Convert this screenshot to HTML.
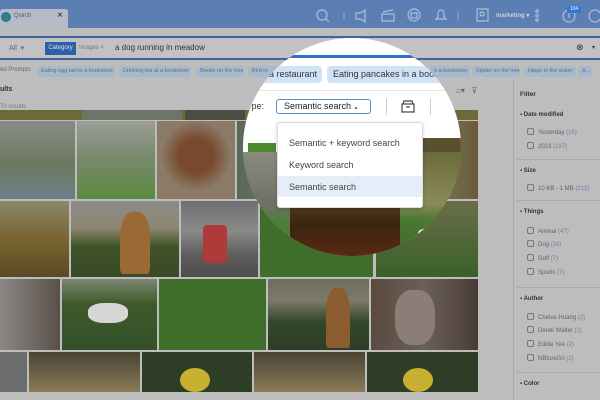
<!DOCTYPE html>
<html><head><meta charset="utf-8"><style>
*{margin:0;padding:0;box-sizing:border-box}
body{width:600px;height:400px;overflow:hidden;position:relative;background:#bdbdbd;font-family:"Liberation Sans",sans-serif}
.a{position:absolute}
.chip{position:absolute;top:66px;height:11px;background:#a9b9cc;border-radius:3px;font-size:5.5px;color:#5a6f8c;line-height:11px;padding:0 4px;white-space:nowrap;overflow:hidden}
.side div{position:absolute;font-size:6px;color:#5a6270}
.cb{display:inline-block;width:7px;height:7px;border:1px solid #777;border-radius:2px;vertical-align:-1px;margin-right:4px}
</style></head><body>
<div class="a" style="left:0;top:0;width:600px;height:28px;background:#5b7fb2"></div>
<div class="a" style="left:0;top:9px;width:68px;height:19px;background:#b6bcc6;border-radius:3px 3px 0 0"></div>
<div class="a" style="left:1px;top:12px;width:10px;height:10px;border-radius:50%;background:#3a8a4a;border:2px solid #2f6fc0"></div>
<div class="a" style="left:14px;top:13px;font-size:6px;color:#556">Qsirch</div>
<div class="a" style="left:57px;top:10px;font-size:10px;color:#222">×</div>
<svg class="a" style="left:310px;top:6px" width="290" height="20" fill="none" stroke="#aebfd8" stroke-width="1.2">
<circle cx="12" cy="9" r="5"/><line x1="16" y1="13" x2="19" y2="16"/>
<line x1="34" y1="6" x2="34" y2="14" stroke="#8aa1c4"/>
<path d="M46 7h4l5-3v12l-5-3h-4z"/>
<path d="M72 8h12v7h-12zM73 6l10-2"/>
<circle cx="104" cy="9" r="6"/><rect x="101" y="7" width="6" height="5"/>
<path d="M126 13h10l-2-2v-4a3 3 0 0 0-6 0v4z"/>
<line x1="148" y1="6" x2="148" y2="14" stroke="#8aa1c4"/>
<rect x="167" y="3" width="11" height="12"/><circle cx="172" cy="8" r="2"/>
<circle cx="227" cy="5" r="1.2"/><circle cx="227" cy="9.5" r="1.2"/><circle cx="227" cy="14" r="1.2"/>
<circle cx="259" cy="10" r="6"/><line x1="259" y1="7" x2="259" y2="12"/>
<circle cx="285" cy="10" r="6"/>
</svg>
<div class="a" style="left:496px;top:12px;font-size:6px;color:#c8d3e4;font-weight:bold">marketing ▾</div>
<div class="a" style="left:567px;top:6px;width:14px;height:7px;background:#2f78d8;font-size:5px;color:#fff;text-align:center;line-height:7px">104</div>
<div class="a" style="left:0;top:36px;width:600px;height:2px;background:#3f64a0"></div>
<div class="a" style="left:0;top:38px;width:600px;height:21px;background:#c2c2c2"></div>
<div class="a" style="left:0;top:58px;width:600px;height:2px;background:#3f64a0"></div>
<div class="a" style="left:9px;top:44px;font-size:7px;color:#4a6a9a">All &nbsp;▾</div>
<div class="a" style="left:45px;top:42px;width:31px;height:13px;background:#2d5fa8;font-size:6px;color:#dfe6f1;line-height:13px;text-align:center">Category</div>
<div class="a" style="left:79px;top:45px;font-size:6px;color:#777">Images ×</div>
<div class="a" style="left:115px;top:43px;font-size:8px;color:#333">a dog running in meadow</div>
<div class="a" style="left:576px;top:42px;font-size:9px;color:#333">⊗</div>
<div class="a" style="left:592px;top:44px;font-size:6px;color:#333">▾</div>
<div class="a" style="left:0;top:67px;font-size:6px;color:#666">ed Prompts</div>
<div class="chip" style="left:37px;width:78px">Eating egg tart in a bookstore</div>
<div class="chip" style="left:119px;width:72px">Drinking tea at a bookstore</div>
<div class="chip" style="left:196px;width:48px">Beetle on the tree</div>
<div class="chip" style="left:248px;width:30px">Bird in</div>
<div class="chip" style="left:430px;width:40px">n a bookstore</div>
<div class="chip" style="left:472px;width:48px">Spider on the tree</div>
<div class="chip" style="left:524px;width:52px">Hippo in the water</div>
<div class="chip" style="left:578px;width:14px">A...</div>
<div class="a" style="left:0;top:86px;font-size:7px;color:#333;font-weight:bold">ults</div>
<div class="a" style="left:0;top:104px;font-size:6px;color:#777">70 results</div>
<div class="a" style="left:456px;top:86px;font-size:8px;color:#666">⌂▾ &nbsp; ⊽</div>
<div class="a" style="left:0;top:110px;width:478px;height:10px;background:#6e6a38"></div>
<div class="a" style="left:82px;top:110px;width:100px;height:10px;background:#6d7568"></div>
<div class="a" style="left:185px;top:110px;width:60px;height:10px;background:#4a4e40"></div>
<div class="a" style="left:0;top:121px;width:75px;height:78px;background:linear-gradient(#8a8b86,#6b7a5e 55%,#6e7e8a)"></div>
<div class="a" style="left:77px;top:121px;width:78px;height:78px;background:linear-gradient(#9a9e98,#7a8a6e 45%,#5a8a3e)"></div>
<div class="a" style="left:157px;top:121px;width:78px;height:78px;background:radial-gradient(circle at 50% 45%,#7a4a30 30%,#8a7a66 60%)"></div>
<div class="a" style="left:237px;top:121px;width:241px;height:78px;background:linear-gradient(90deg,#5a6a5a,#7a7a55 80%,#6c5a3a)"></div>
<div class="a" style="left:0;top:201px;width:69px;height:76px;background:linear-gradient(#8a8a6a,#7a6430 50%,#5a4a24)"></div>
<div class="a" style="left:71px;top:201px;width:108px;height:76px;background:linear-gradient(#8a8c88,#8e8670 35%,#3e5428 60%,#3a4a26)"></div>
<div class="a" style="left:120px;top:212px;width:30px;height:62px;border-radius:40% 40% 10% 10%;background:#9a6a36"></div>
<div class="a" style="left:181px;top:201px;width:77px;height:76px;background:linear-gradient(#6e7074,#8a8a88 40%,#5e5e5e 70%,#4e4e4e)"></div>
<div class="a" style="left:203px;top:225px;width:24px;height:38px;background:#b03a3a;border-radius:4px"></div>
<div class="a" style="left:260px;top:201px;width:113px;height:76px;background:#3f6e2a"></div>
<div class="a" style="left:376px;top:201px;width:102px;height:76px;background:linear-gradient(#6a6e4a,#3a6028)"></div>
<div class="a" style="left:0;top:279px;width:60px;height:71px;background:linear-gradient(90deg,#8a8886,#5a5048)"></div>
<div class="a" style="left:62px;top:279px;width:95px;height:71px;background:linear-gradient(#7a8670,#3e5a2a 35%,#34502a)"></div>
<div class="a" style="left:88px;top:303px;width:40px;height:20px;border-radius:40%;background:#d6d6d6"></div>
<div class="a" style="left:159px;top:279px;width:107px;height:71px;background:#3f6e2a"></div>
<div class="a" style="left:268px;top:279px;width:101px;height:71px;background:linear-gradient(#6e6c5e,#7e7a6a 30%,#34482a 60%,#2e3e26)"></div>
<div class="a" style="left:326px;top:288px;width:24px;height:60px;border-radius:40% 40% 10% 10%;background:#8a5c30"></div>
<div class="a" style="left:371px;top:279px;width:107px;height:71px;background:linear-gradient(90deg,#5a4a40,#6a6058 50%,#4a3c34)"></div>
<div class="a" style="left:395px;top:290px;width:40px;height:55px;border-radius:40%;background:#8a7e76"></div>
<div class="a" style="left:0;top:352px;width:27px;height:40px;background:#6a6c6e"></div>
<div class="a" style="left:29px;top:352px;width:111px;height:40px;background:linear-gradient(#4a4434,#8a7a56)"></div>
<div class="a" style="left:142px;top:352px;width:110px;height:40px;background:#2e3e26"></div>
<div class="a" style="left:180px;top:368px;width:30px;height:24px;border-radius:50%;background:#c8b030"></div>
<div class="a" style="left:254px;top:352px;width:111px;height:40px;background:linear-gradient(#4a4434,#8a7a56)"></div>
<div class="a" style="left:367px;top:352px;width:111px;height:40px;background:#2e3e26"></div>
<div class="a" style="left:403px;top:368px;width:30px;height:24px;border-radius:50%;background:#c8b030"></div>
<div class="a" style="left:513px;top:80px;width:1px;height:320px;background:#aaa"></div>
<div class="side">
<div style="left:520px;top:91px;font-weight:bold;font-size:6.5px;color:#333">Filter</div>
<div style="left:520px;top:112px;font-weight:bold;color:#333">▪ Date modified</div>
<div style="left:527px;top:128px"><span class="cb"></span>Yesterday <span style="color:#6a7fa0">(15)</span></div>
<div style="left:527px;top:142px"><span class="cb"></span>2023 <span style="color:#6a7fa0">(197)</span></div>
<div style="left:520px;top:168px;font-weight:bold;color:#333">▪ Size</div>
<div style="left:527px;top:184px"><span class="cb"></span>10 KB - 1 MB <span style="color:#6a7fa0">(212)</span></div>
<div style="left:520px;top:209px;font-weight:bold;color:#333">▪ Things</div>
<div style="left:527px;top:227px"><span class="cb"></span>Animal <span style="color:#6a7fa0">(47)</span></div>
<div style="left:527px;top:240px"><span class="cb"></span>Dog <span style="color:#6a7fa0">(28)</span></div>
<div style="left:527px;top:254px"><span class="cb"></span>Golf <span style="color:#6a7fa0">(7)</span></div>
<div style="left:527px;top:268px"><span class="cb"></span>Sports <span style="color:#6a7fa0">(7)</span></div>
<div style="left:520px;top:296px;font-weight:bold;color:#333">▪ Author</div>
<div style="left:527px;top:313px"><span class="cb"></span>Chelus Huang <span style="color:#6a7fa0">(2)</span></div>
<div style="left:527px;top:326px"><span class="cb"></span>Derek Walter <span style="color:#6a7fa0">(2)</span></div>
<div style="left:527px;top:340px"><span class="cb"></span>Eddie Yee <span style="color:#6a7fa0">(2)</span></div>
<div style="left:527px;top:354px"><span class="cb"></span>NBtureGrl <span style="color:#6a7fa0">(2)</span></div>
<div style="left:520px;top:381px;font-weight:bold;color:#333">▪ Color</div>
</div>
<div class="a" style="left:517px;top:159px;width:83px;height:1px;background:#aaa"></div>
<div class="a" style="left:517px;top:200px;width:83px;height:1px;background:#aaa"></div>
<div class="a" style="left:517px;top:287px;width:83px;height:1px;background:#aaa"></div>
<div class="a" style="left:517px;top:372px;width:83px;height:1px;background:#aaa"></div>
<div class="a" style="left:243px;top:38px;width:218px;height:218px;border-radius:50%;overflow:hidden;background:#fff">
 <div class="a" style="left:0;top:17px;width:218px;height:3px;background:#2f6fcf"></div>
 <div class="a" style="left:0;top:28px;width:79px;height:17px;background:#cfe3f7;border-radius:4px;font-size:9px;color:#333;line-height:17px;text-align:right;padding-right:5px">a restaurant</div>
 <div class="a" style="left:84px;top:28px;width:140px;height:17px;background:#cfe3f7;border-radius:4px;font-size:9px;color:#333;line-height:17px;padding-left:6px;white-space:nowrap">Eating pancakes in a bookstore</div>
 <div class="a" style="left:0;top:52px;width:218px;height:1px;background:#e6e6e6"></div>
 <div class="a" style="left:4px;top:63px;font-size:9px;color:#333">ype:</div>
 <div class="a" style="left:33px;top:61px;width:95px;height:15px;border:1px solid #5a8ad0;border-radius:3px;font-size:9px;color:#222;line-height:13px;padding-left:7px">Semantic search <span style="font-size:5px;color:#2f6fcf">▲</span></div>
 <div class="a" style="left:143px;top:60px;width:1px;height:17px;background:#ccc"></div>
 <svg class="a" style="left:158px;top:61px" width="14" height="14" fill="none" stroke="#444" stroke-width="1.2"><rect x="1" y="5" width="12" height="8"/><path d="M2 5l1-3h8l1 3M5 8h4"/></svg>
 <div class="a" style="left:187px;top:60px;width:1px;height:17px;background:#ccc"></div>
 <div class="a" style="left:5px;top:105px;width:28px;height:10px;background:#4a8a2a"></div>
 <div class="a" style="left:175px;top:100px;width:43px;height:14px;background:#5a5030"></div>
 <div class="a" style="left:0;top:114px;width:218px;height:104px;background:#6a7058"></div>
 <div class="a" style="left:0;top:114px;width:46px;height:104px;background:linear-gradient(#8a8a82,#6e7068 50%,#4a8030 70%)"></div>
 <div class="a" style="left:47px;top:114px;width:110px;height:104px;background:linear-gradient(#8a7a3a,#5a4a20 40%,#3a2410 70%,#5a2a12)"></div>
 <div class="a" style="left:157px;top:114px;width:61px;height:104px;background:linear-gradient(#6a6a3a,#8a8a5a 50%,#4a7a30 65%,#3e6a2a)"></div>
 <div class="a" style="left:175px;top:190px;width:30px;height:12px;border-radius:40%;background:#e8e8e8"></div>
</div>
<div class="a" style="left:277px;top:122px;width:146px;height:86px;background:#fff;border:1px solid #ddd;border-radius:3px;box-shadow:0 1px 3px rgba(0,0,0,.2)">
 <div class="a" style="left:11px;top:15px;font-size:9px;color:#444;white-space:nowrap">Semantic + keyword search</div>
 <div class="a" style="left:11px;top:37px;font-size:9px;color:#444">Keyword search</div>
 <div class="a" style="left:0;top:53px;width:144px;height:21px;background:#e4edf8"></div>
 <div class="a" style="left:11px;top:59px;font-size:9px;color:#444">Semantic search</div>
</div>
</body></html>
